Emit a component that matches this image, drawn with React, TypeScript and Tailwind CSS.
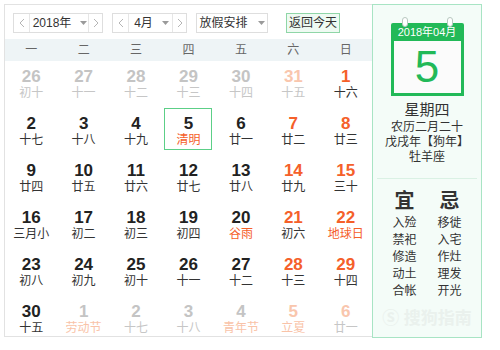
import * as React from "react";

type Day = {
  d: number;
  l: string;
  other?: boolean; // not in current month
  wk?: boolean; // weekend
  fest?: boolean; // festival / solar term
  today?: boolean;
};

const WEEK = ["一", "二", "三", "四", "五", "六", "日"];

const DAYS: Day[] = [
  { d: 26, l: "初十", other: true },
  { d: 27, l: "十一", other: true },
  { d: 28, l: "十二", other: true },
  { d: 29, l: "十三", other: true },
  { d: 30, l: "十四", other: true },
  { d: 31, l: "十五", other: true, wk: true },
  { d: 1, l: "十六", wk: true },
  { d: 2, l: "十七" },
  { d: 3, l: "十八" },
  { d: 4, l: "十九" },
  { d: 5, l: "清明", fest: true, today: true },
  { d: 6, l: "廿一" },
  { d: 7, l: "廿二", wk: true },
  { d: 8, l: "廿三", wk: true },
  { d: 9, l: "廿四" },
  { d: 10, l: "廿五" },
  { d: 11, l: "廿六" },
  { d: 12, l: "廿七" },
  { d: 13, l: "廿八" },
  { d: 14, l: "廿九", wk: true },
  { d: 15, l: "三十", wk: true },
  { d: 16, l: "三月小" },
  { d: 17, l: "初二" },
  { d: 18, l: "初三" },
  { d: 19, l: "初四" },
  { d: 20, l: "谷雨", fest: true },
  { d: 21, l: "初六", wk: true },
  { d: 22, l: "地球日", wk: true, fest: true },
  { d: 23, l: "初八" },
  { d: 24, l: "初九" },
  { d: 25, l: "初十" },
  { d: 26, l: "十一" },
  { d: 27, l: "十二" },
  { d: 28, l: "十三", wk: true },
  { d: 29, l: "十四", wk: true },
  { d: 30, l: "十五" },
  { d: 1, l: "劳动节", other: true, fest: true },
  { d: 2, l: "十七", other: true },
  { d: 3, l: "十八", other: true },
  { d: 4, l: "青年节", other: true, fest: true },
  { d: 5, l: "立夏", other: true, wk: true, fest: true },
  { d: 6, l: "廿一", other: true, wk: true },
];

const YI = ["入殓", "禁祀", "修造", "动土", "合帐"];
const JI = ["移徙", "入宅", "作灶", "理发", "开光"];

function Chevron({ dir }: { dir: "l" | "r" }) {
  return (
    <svg width="6" height="10" viewBox="0 0 6 10">
      <path
        d={dir === "l" ? "M5 1 L1 5 L5 9" : "M1 1 L5 5 L1 9"}
        fill="none"
        stroke="#b5b5b5"
        strokeWidth="1"
      />
    </svg>
  );
}

function Caret() {
  return (
    <svg width="7" height="4" viewBox="0 0 7 4">
      <path d="M0 0 L7 0 L3.5 4 Z" fill="#9a9a9a" />
    </svg>
  );
}

function StepSelect({ label, width }: { label: string; width: string }) {
  return (
    <div className={`flex h-[20px] ${width} border border-[#dedede] bg-white`}>
      <div className="flex w-[16px] items-center justify-center border-r border-[#e6e6e6]">
        <Chevron dir="l" />
      </div>
      <div className="flex flex-1 items-center justify-center gap-[9px] pl-[2px] text-[12px] text-[#333]">
        <span>{label}</span>
        <Caret />
      </div>
      <div className="flex w-[14px] items-center justify-center border-l border-[#e6e6e6]">
        <Chevron dir="r" />
      </div>
    </div>
  );
}

function DayCell({ day }: { day: Day }) {
  let num = "text-[#222]";
  if (day.other) num = day.wk ? "text-[#f9c6ad]" : "text-[#c4c4c4]";
  else if (day.wk) num = "text-[#f5602a]";

  let lunar = "text-[#333]";
  if (day.fest) lunar = day.other ? "text-[#f9c3a8]" : "text-[#f5602a]";
  else if (day.other) lunar = "text-[#c6c6c6]";

  return (
    <div className="flex h-[47px] justify-center">
      <div
        className={`flex h-[42px] w-[48px] flex-col items-center border pt-[6px] ${
          day.today ? "border-[#5ccf87]" : "border-transparent"
        }`}
      >
        <div className={`h-[18px] text-[17px] font-bold leading-[18px] ${num}`}>{day.d}</div>
        <div className={`h-[14px] whitespace-nowrap text-[12px] leading-[14px] ${lunar}`}>{day.l}</div>
      </div>
    </div>
  );
}

export default function App() {
  return (
    <div className="h-[350px] w-[500px] bg-white font-['Liberation_Sans','Noto_Sans_CJK_SC',sans-serif]">
      <div className="flex pl-[4px] pt-[4px]">
        {/* calendar body */}
        <div className="flex h-[333px] w-[368px] flex-col overflow-hidden border-y border-l border-[#e2e2e2]">
          <div className="flex h-[34px] shrink-0 items-start gap-[9px] pl-[8px] pt-[8px]">
            <StepSelect label="2018年" width="w-[90px]" />
            <StepSelect label="4月" width="w-[75px]" />
            <div className="flex h-[20px] w-[72px] items-center justify-center gap-[10px] border border-[#dedede] text-[12px] text-[#333]">
              <span>放假安排</span>
              <Caret />
            </div>
            <div className="ml-[9px] flex h-[20px] w-[54px] items-center justify-center border border-[#8fd6a7] bg-[#eefaf2] text-[12px] text-[#333]">
              返回今天
            </div>
          </div>
          <div className="grid h-[22px] shrink-0 grid-cols-7 bg-[#eef4f6]">
            {WEEK.map((w) => (
              <div key={w} className="flex items-center justify-center text-[12px] text-[#666]">
                {w}
              </div>
            ))}
          </div>
          <div className="grid grid-cols-7">
            {DAYS.map((day, i) => (
              <DayCell key={i} day={day} />
            ))}
          </div>
        </div>

        {/* day detail */}
        <div className="flex h-[334px] w-[110px] flex-col items-center border border-[#a8e4c4] bg-[#f4fcf8] pt-[12px]">
          <div className="relative h-[79px] w-[73px]">
            <div className="mt-[6px] flex h-[18px] items-center justify-center rounded-t-[2px] bg-[#22b958] text-[11px] text-white">
              2018年04月
            </div>
            <div className="flex h-[55px] items-center justify-center border-[3px] border-t-0 border-[#22b958] bg-[#fbfbfb] text-[44px] leading-none text-[#22b958]">
              5
            </div>
            <div className="absolute left-[11px] top-0 h-[10px] w-[6px] rounded-full border border-[#b8c8bf] bg-white" />
            <div className="absolute right-[11px] top-0 h-[10px] w-[6px] rounded-full border border-[#b8c8bf] bg-white" />
          </div>
          <div className="mt-[5px] text-[15px] leading-[18px] text-[#333]">星期四</div>
          <div className="mt-[1px] flex flex-col items-center text-[12px] leading-[15px] text-[#333]">
            <span>农历二月二十</span>
            <span>戊戌年【狗年】</span>
            <span>牡羊座</span>
          </div>
          <div className="mt-[13px] h-px w-[100px] bg-[#daf1e4]" />
          <div className="mt-[10px] grid grid-cols-[40px_40px] gap-x-[5px] text-[#333]">
            <div className="text-center text-[20px] font-semibold leading-[24px]">宜</div>
            <div className="text-center text-[20px] font-semibold leading-[24px]">忌</div>
            <div className="mt-[2px] flex flex-col items-center text-[12px] leading-[17px]">
              {YI.map((t) => (
                <span key={t}>{t}</span>
              ))}
            </div>
            <div className="mt-[2px] flex flex-col items-center text-[12px] leading-[17px]">
              {JI.map((t) => (
                <span key={t}>{t}</span>
              ))}
            </div>
          </div>
          <div className="mt-[6px] text-[17px] font-bold text-[#eaf1ed]">Ⓢ 搜狗指南</div>
        </div>
      </div>
    </div>
  );
}
